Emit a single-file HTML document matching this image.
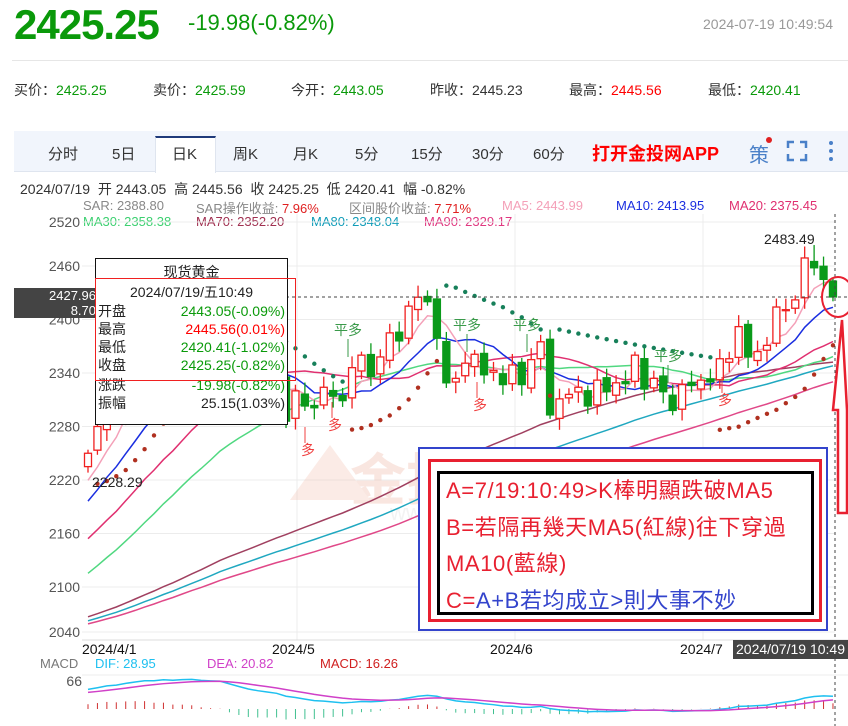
<!DOCTYPE html>
<html><head><meta charset="utf-8">
<style>
*{margin:0;padding:0;box-sizing:border-box}
body{width:848px;height:726px;overflow:hidden;background:#fff;font-family:"Liberation Sans","Noto Sans CJK SC",sans-serif;position:relative;color:#333}
.a{position:absolute;white-space:nowrap}
.g{color:#0a9a0a}.r{color:#f00}
</style></head><body>
<div class="a" style="left:14px;top:1px;font-size:42px;font-weight:bold;color:#0a990a;letter-spacing:-1px">2425.25</div>
<div class="a" style="left:188px;top:10px;font-size:22px;color:#0a990a">-19.98(-0.82%)</div>
<div class="a" style="left:703px;top:16px;font-size:14px;color:#999">2024-07-19 10:49:54</div>
<div class="a" style="left:12px;top:60px;width:836px;height:1px;background:#e6e6e6"></div>
<div class="a" style="left:14px;top:80px;font-size:14px">买价：<span class="g">2425.25</span></div>
<div class="a" style="left:153px;top:80px;font-size:14px">卖价：<span class="g">2425.59</span></div>
<div class="a" style="left:291px;top:80px;font-size:14px">今开：<span class="g">2443.05</span></div>
<div class="a" style="left:430px;top:80px;font-size:14px">昨收：<span>2445.23</span></div>
<div class="a" style="left:569px;top:80px;font-size:14px">最高：<span class="r">2445.56</span></div>
<div class="a" style="left:708px;top:80px;font-size:14px">最低：<span class="g">2420.41</span></div>

<div class="a" style="left:14px;top:131px;width:834px;height:41px;background:#f1f5fc;border-bottom:1px solid #dfe5ef"></div>
<div class="a" style="left:155px;top:136px;width:61px;height:37px;background:#fff;border-top:2px solid #1f3a7a;border-left:1px solid #dfe5ef;border-right:1px solid #dfe5ef"></div>
<div class="a" style="left:48px;top:143px;font-size:15px;color:#333">分时</div>
<div class="a" style="left:112px;top:143px;font-size:15px">5日</div>
<div class="a" style="left:172px;top:143px;font-size:15px">日K</div>
<div class="a" style="left:233px;top:143px;font-size:15px">周K</div>
<div class="a" style="left:293px;top:143px;font-size:15px">月K</div>
<div class="a" style="left:355px;top:143px;font-size:15px">5分</div>
<div class="a" style="left:411px;top:143px;font-size:15px">15分</div>
<div class="a" style="left:472px;top:143px;font-size:15px">30分</div>
<div class="a" style="left:533px;top:143px;font-size:15px">60分</div>
<div class="a" style="left:592px;top:140px;font-size:18px;font-weight:bold;color:#f00">打开金投网APP</div>
<div class="a" style="left:749px;top:139px;font-size:20px;color:#4a80c8">策</div>
<div class="a" style="left:766px;top:137px;width:6px;height:6px;border-radius:3px;background:#e02020"></div>
<svg class="a" style="left:786px;top:140px" width="22" height="22"><path d="M2 8V2H8M14 2H20V8M20 14V20H14M8 20H2V14" fill="none" stroke="#4a80c8" stroke-width="2.5"/></svg>
<svg class="a" style="left:826px;top:140px" width="10" height="22"><circle cx="5" cy="3" r="2" fill="#4a80c8"/><circle cx="5" cy="11" r="2" fill="#4a80c8"/><circle cx="5" cy="19" r="2" fill="#4a80c8"/></svg>

<div class="a" style="left:20px;top:179px;font-size:14px;color:#333">2024/07/19 &nbsp;开 2443.05 &nbsp;高 2445.56 &nbsp;收 2425.25 &nbsp;低 2420.41 &nbsp;幅 -0.82%</div>
<div class="a" style="left:83px;top:198px;font-size:13px;color:#888">SAR: 2388.80</div>
<div class="a" style="left:196px;top:198px;font-size:13px;color:#888">SAR操作收益: <span style="color:#e02020">7.96%</span></div>
<div class="a" style="left:349px;top:198px;font-size:13px;color:#888">区间股价收益: <span style="color:#e02020">7.71%</span></div>
<div class="a" style="left:502px;top:198px;font-size:13px;color:#f4a0b8">MA5: 2443.99</div>
<div class="a" style="left:616px;top:198px;font-size:13px;color:#1a2ee0">MA10: 2413.95</div>
<div class="a" style="left:729px;top:198px;font-size:13px;color:#e03070">MA20: 2375.45</div>
<div class="a" style="left:83px;top:214px;font-size:13px;color:#3cd070">MA30: 2358.38</div>
<div class="a" style="left:196px;top:214px;font-size:13px;color:#a03050">MA70: 2352.20</div>
<div class="a" style="left:311px;top:214px;font-size:13px;color:#109cb8">MA80: 2348.04</div>
<div class="a" style="left:424px;top:214px;font-size:13px;color:#e03880">MA90: 2329.17</div>

<svg id="c" class="a" style="left:0;top:0" width="848" height="726"></svg>

<div class="a" style="left:14px;top:288px;width:86px;height:30px;background:#444;color:#fff;font-size:13px;text-align:right;padding-right:4px;line-height:15px">2427.96<br>8.70</div>
<div class="a" style="left:95px;top:258px;width:193px;height:167px;background:#fff;border:1px solid #111;font-size:14px;color:#222">
 <div style="text-align:center;margin-top:3px">现货黄金</div>
 <div style="text-align:center">2024/07/19/五10:49</div>
 <div style="display:flex;justify-content:space-between;padding:0 2px;line-height:18px"><span>开盘</span><span class="g">2443.05(-0.09%)</span></div>
 <div style="display:flex;justify-content:space-between;padding:0 2px;line-height:18px"><span>最高</span><span class="r">2445.56(0.01%)</span></div>
 <div style="display:flex;justify-content:space-between;padding:0 2px;line-height:18px"><span>最低</span><span class="g">2420.41(-1.02%)</span></div>
 <div style="display:flex;justify-content:space-between;padding:0 2px;line-height:18px"><span>收盘</span><span class="g">2425.25(-0.82%)</span></div>
 <div style="display:flex;justify-content:space-between;padding:0 2px;line-height:18px;margin-top:2px"><span>涨跌</span><span class="g">-19.98(-0.82%)</span></div>
 <div style="display:flex;justify-content:space-between;padding:0 2px;line-height:18px"><span>振幅</span><span>25.15(1.03%)</span></div>
</div>
<div class="a" style="left:95px;top:278px;width:201px;height:103px;border:1px solid #f02020"></div>

<div class="a" style="left:418px;top:447px;width:410px;height:184px;border:2px solid #3344cc;background:#fff"></div>
<div class="a" style="left:428px;top:459px;width:394px;height:163px;border:3px solid #e82030"></div>
<div class="a" style="left:437px;top:471px;width:377px;height:144px;border:3px solid #000"></div>
<div class="a" style="left:446px;top:473px;font-size:22px;color:#e82030;line-height:36.5px;letter-spacing:0.6px">A=7/19:10:49&gt;K棒明顯跌破MA5<br>B=若隔再幾天MA5(紅線)往下穿過<br>MA10(藍線)<br>C=<span style="color:#3344cc">A+B若均成立&gt;則大事不妙</span></div>

<div class="a" style="left:733px;top:640px;width:115px;height:19px;background:#444;color:#fff;font-size:14px;padding-left:3px;line-height:19px">2024/07/19 10:49</div>

<script>
var S=document.getElementById('c'),h='';
function L(s){h+=s;}
var closes=[2250,2280,2300,2290,2330,2339,2352,2333,2372,2344,2383,2383,2361,2379,2391,2327,2322,2316,2332,2337,2335,2286,2320,2303,2301,2324,2314,2309,2346,2360,2336,2358,2385,2376,2415,2425,2420,2379,2329,2334,2351,2361,2338,2343,2327,2349,2327,2355,2375,2293,2311,2316,2324,2303,2332,2319,2329,2328,2360,2322,2334,2319,2298,2327,2326,2332,2330,2356,2356,2392,2358,2364,2371,2414,2411,2422,2469,2458,2445,2425.25];
var pre=[];for(var i=0;i<90;i++){pre.push(i<66?2030+Math.sin(i*0.7)*8:2030+(i-66)*8.5+Math.sin(i*0.9)*6);}
var all=pre.concat(closes);
function X(k){return 88+k*9.43}
function Y(p){return 373-(p-2340)*0.8917}
[2520,2460,2400,2340,2280,2220,2160,2100,2040].forEach(function(p){var y=Y(p);if(p==2520)y=222;if(p==2040)y=632;L('<line x1="82" x2="835" y1="'+y+'" y2="'+y+'" stroke="#ececec"/>');L('<text x="80" y="'+(y+5)+'" text-anchor="end" font-size="14" fill="#555">'+p+'</text>');});
[297,515,703].forEach(function(x){L('<line x1="'+x+'" x2="'+x+'" y1="214" y2="640" stroke="#ececec"/>')});
L('<line x1="82" x2="848" y1="640" y2="640" stroke="#ddd"/>');
L('<g opacity=".35"><text x="350" y="500" font-size="56" fill="#f0b8a8" font-weight="bold">金投网</text><text x="390" y="520" font-size="22" fill="#ddd">www.cngold.org</text><path d="M290 500 L330 445 L370 500 Z" fill="#f4c8b8"/></g>');
function ma(n,col){var d='';for(var k=0;k<80;k++){var g=90+k,s=0;for(var j=0;j<n;j++)s+=all[g-j];var v=s/n;d+=(k?'L':'M')+X(k).toFixed(1)+' '+Y(v).toFixed(1);}L('<path d="'+d+'" fill="none" stroke="'+col+'" stroke-width="1.5"/>');}
ma(90,'#e04888');ma(80,'#20a8c0');ma(70,'#a04060');ma(30,'#50d880');ma(20,'#e03070');ma(10,'#1a2ee0');ma(5,'#f4a0b8');
var O=[],H=[],Lo=[];
for(var k=0;k<80;k++){var c=closes[k],o=k?closes[k-1]+Math.sin(k*2.1)*4:2235;var hi=Math.max(o,c)+4+Math.abs(Math.sin(k*1.3))*9,lo=Math.min(o,c)-4-Math.abs(Math.cos(k*1.7))*9;
if(k==79){o=2443.05;hi=2445.56;lo=2420.41}if(k==77){hi=2483.49}if(k==0){lo=2228.29}
O.push(o);H.push(hi);Lo.push(lo);
var x=X(k),up=c>=o,col=up?'#f02020':'#0a9a1a',t=Y(Math.max(o,c)),b=Y(Math.min(o,c));if(b-t<1)b=t+1;
L('<line x1="'+x+'" x2="'+x+'" y1="'+Y(hi)+'" y2="'+Y(lo)+'" stroke="'+col+'" stroke-width="1.3"/>');
L('<rect x="'+(x-3.5)+'" y="'+t+'" width="7" height="'+(b-t)+'" fill="'+(up?'#fff':col)+'" stroke="'+col+'" stroke-width="1.3"/>');}
var up=true,sar=2215,ep=H[0],af=0.02;
for(var k=1;k<80;k++){sar=sar+af*(ep-sar);
if(up){if(Lo[k]<sar){up=false;sar=ep;ep=Lo[k];af=0.02}else if(H[k]>ep){ep=H[k];af=Math.min(af+0.02,0.2)}}
else{if(H[k]>sar){up=true;sar=ep;ep=H[k];af=0.02}else if(Lo[k]<ep){ep=Lo[k];af=Math.min(af+0.02,0.2)}}
L('<circle cx="'+X(k)+'" cy="'+Y(sar)+'" r="2.2" fill="'+(up?'#b03020':'#17805a')+'"/>');}
L('<line x1="82" x2="848" y1="297" y2="297" stroke="#444" stroke-dasharray="3,3"/>');
L('<line x1="835" x2="835" y1="214" y2="726" stroke="#444" stroke-dasharray="3,3"/>');
L('<text x="764" y="244" font-size="14" fill="#222">2483.49</text><text x="92" y="487" font-size="14" fill="#222">2228.29</text>');
[[348,335,'平多'],[467,330,'平多'],[527,330,'平多'],[668,361,'平多']].forEach(function(a){L('<text x="'+(a[0]-14)+'" y="'+a[1]+'" font-size="14" fill="#3a9a4a">'+a[2]+'</text><line x1="'+a[0]+'" x2="'+a[0]+'" y1="'+(a[1]+4)+'" y2="'+(a[1]+22)+'" stroke="#3a9a4a"/>');});
[[305,455],[332,430],[477,410],[722,405]].forEach(function(a){L('<line x1="'+a[0]+'" x2="'+a[0]+'" y1="'+(a[1]-28)+'" y2="'+(a[1]-12)+'" stroke="#f04040"/><text x="'+(a[0]-4)+'" y="'+a[1]+'" font-size="14" fill="#f04040">多</text>');});
L('<ellipse cx="838" cy="297" rx="16" ry="20" fill="none" stroke="#e82030" stroke-width="2"/>');
L('<path d="M842 320 L847 410 L847 513 L838 513 L838 410 L833 410 Z" fill="#fff" stroke="#e82030" stroke-width="2.5"/>');
[[82,'2024/4/1'],[272,'2024/5'],[490,'2024/6'],[680,'2024/7']].forEach(function(a){L('<text x="'+a[0]+'" y="654" font-size="14" fill="#111">'+a[1]+'</text>')});
L('<text x="40" y="668" font-size="13" fill="#777">MACD</text><text x="95" y="668" font-size="13" fill="#1ec0f0">DIF: 28.95</text><text x="207" y="668" font-size="13" fill="#d040c8">DEA: 20.82</text><text x="320" y="668" font-size="13" fill="#d02020">MACD: 16.26</text><text x="82" y="686" font-size="14" fill="#555" text-anchor="end">66</text>');
L('<line x1="82" x2="848" y1="675" y2="675" stroke="#eee"/>');
var e12=all[0],e26=all[0],dea=0,D=[],E=[];
for(var i=0;i<all.length;i++){e12=e12+(all[i]-e12)*2/13;e26=e26+(all[i]-e26)*2/27;var dif=e12-e26;dea=dea+(dif-dea)*0.2;D.push(dif);E.push(dea);}
var mx=1;for(var k=0;k<80;k++)mx=Math.max(mx,Math.abs(D[90+k]));var sc=Math.min(29/66,34/mx),y0=709,d1='',d2='';
for(var k=0;k<80;k++){var g=90+k,x=X(k),m=2*(D[g]-E[g]);L('<line x1="'+x+'" x2="'+x+'" y1="'+y0+'" y2="'+Math.min(726,y0-m*sc*0.8)+'" stroke="'+(m>0?'#d03030':'#40c090')+'"/>');d1+=(k?'L':'M')+x+' '+Math.min(726,y0-D[g]*sc);d2+=(k?'L':'M')+x+' '+Math.min(726,y0-E[g]*sc);}
L('<path d="'+d1+'" fill="none" stroke="#1ec0f0" stroke-width="1.5"/><path d="'+d2+'" fill="none" stroke="#d040c8" stroke-width="1.5"/>');
S.innerHTML=h;
</script>
</body></html>
